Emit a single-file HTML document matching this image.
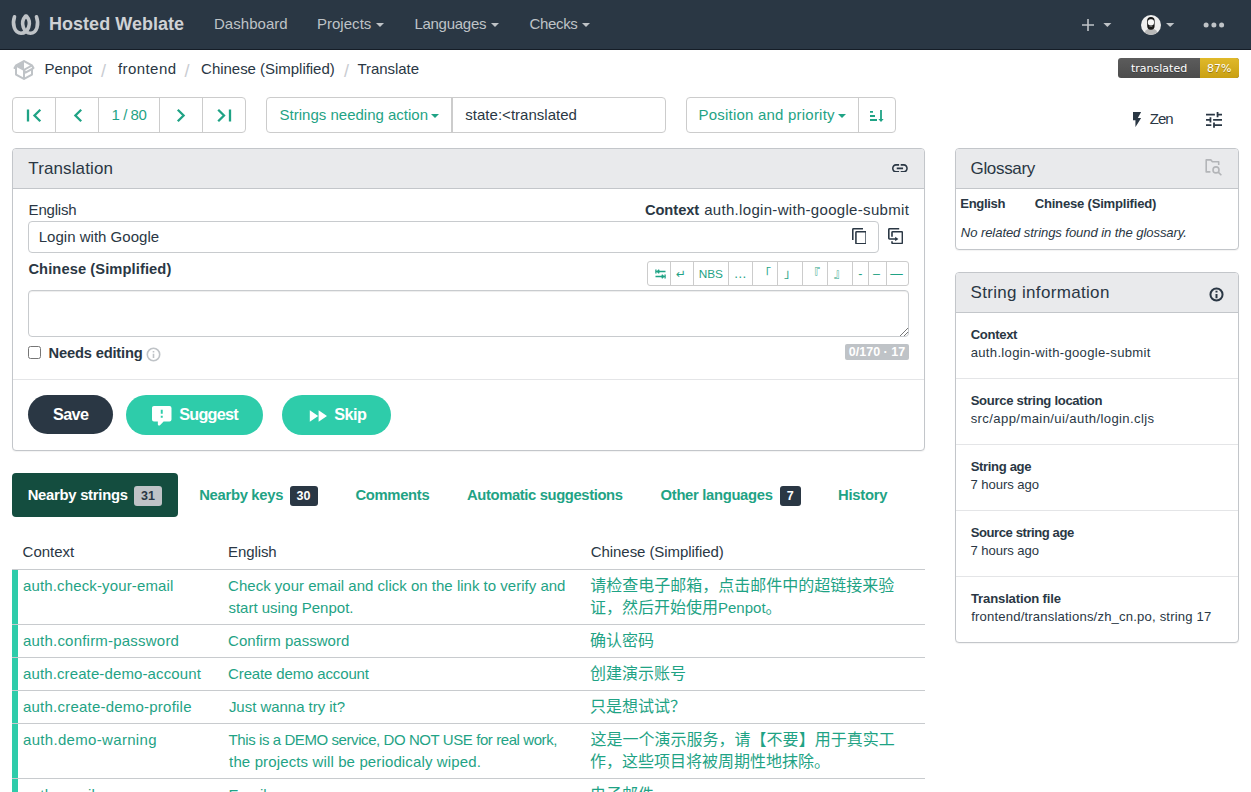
<!DOCTYPE html>
<html lang="en">
<head>
<meta charset="utf-8">
<title>Penpot/frontend — Chinese (Simplified) @ Hosted Weblate</title>
<style>
*{box-sizing:border-box;margin:0;padding:0}
html,body{width:1251px;height:792px;overflow:hidden;background:#fff}
body{font-family:"Liberation Sans","Noto Sans CJK SC",sans-serif;font-size:15px;color:#2a3744;position:relative;line-height:22px}
a{color:#1fa385;text-decoration:none}
.abs{position:absolute}
.t{position:absolute;white-space:nowrap;line-height:22px}
/* navbar */
#nav{position:absolute;left:0;top:0;width:1251px;height:50px;background:#2a3744;border-bottom:1px solid #151d27}
#nav .t{color:#bfc3c7;font-size:15px}
#nav .brand{font-weight:bold;font-size:18px;color:#cfd2d5}
.caret{display:inline-block;width:0;height:0;border-left:4px solid transparent;border-right:4px solid transparent;border-top:4px solid currentColor;vertical-align:middle;margin-left:4px}
/* breadcrumb */
.bc{color:#2a3744;font-size:15px}
.sep{color:#c9ccd2;font-size:18px}
/* buttons */
.btng{position:absolute;border:1px solid #ccc;border-radius:4px;background:#fff;height:36px}
.btng .d{position:absolute;top:0;width:1px;height:34px;background:#ccc}
.green{color:#1fa385}
/* panels */
.panel{position:absolute;border:1px solid #c3c6ca;border-radius:4px;background:#fff;box-shadow:0 1px 1px rgba(0,0,0,.05)}
.ph{position:absolute;left:0;top:0;right:0;height:40px;background:#e9eaec;border-bottom:1px solid #c3c6ca;border-radius:3px 3px 0 0}
.ph .t{font-size:17px;top:9px;left:15px;color:#2a3744}
.b{font-weight:bold;font-size:14.700px}
.s{font-size:13.100px}
.tb{font-size:14.800px}
.bdg{position:absolute;top:486px;height:20px;border-radius:3px;background:#2a3744;color:#fff;font-weight:bold;font-size:12.500px;line-height:20px;text-align:center}
.zh{font-size:16px}
.hr{position:absolute;left:0;right:0;height:1px;background:#e4e5e7}
</style>
</head>
<body>
<div id="nav">
<svg class="abs" style="left:10px;top:12px" width="32" height="26" viewBox="10 12 32 26"><g fill="none" stroke="#bfc3c7" stroke-width="3.600" stroke-linecap="round"><path d="M14.500 16.800C11.800 24 14.500 33.200 21 33.200C28 33.200 32.500 23 26.600 16.200"/><path d="M25.400 16.200C19.500 23 24 33.200 30.500 33.200C37 33.200 39.200 24 36.500 16.800"/></g></svg>
<span class="t brand" style="left:49.0px;top:13px;letter-spacing:0.03px">Hosted Weblate</span>
<span class="t" style="left:214.0px;top:13px;letter-spacing:0.03px">Dashboard</span>
<span class="t" style="left:316.9px;top:13px;letter-spacing:0.04px">Projects</span><i class="caret abs" style="left:375.700px;top:23px;margin:0;color:#bfc3c7"></i>
<span class="t" style="left:414.4px;top:13px;letter-spacing:-0.27px">Languages</span><i class="caret abs" style="left:490.800px;top:23px;margin:0;color:#bfc3c7"></i>
<span class="t" style="left:529.5px;top:13px;letter-spacing:-0.33px">Checks</span><i class="caret abs" style="left:581.800px;top:23px;margin:0;color:#bfc3c7"></i>
<svg class="abs" style="left:1080px;top:17px" width="34" height="16" viewBox="0 0 34 16"><path d="M2 8h12M8 2v12" stroke="#bfc3c7" stroke-width="1.6" fill="none"/><path d="M23.4 6h8l-4 4z" fill="#bfc3c7"/></svg>
<svg class="abs" style="left:1141px;top:15px" width="36" height="20" viewBox="0 0 36 20"><defs><clipPath id="av"><circle cx="10" cy="10" r="10"/></clipPath></defs><g clip-path="url(#av)"><rect width="20" height="20" fill="#efefef"/><ellipse cx="10" cy="20" rx="7" ry="6.800" fill="#b8b8b8"/><rect x="6.200" y="1.900" width="7.400" height="12.800" rx="3.600" fill="#161616"/><rect x="6.900" y="4.300" width="6.100" height="6.100" rx="2.600" fill="#f8f8f8"/><path d="M8.400 11.700q1.500-.8 3 0" stroke="#888" stroke-width=".8" fill="none"/></g><path d="M25 7.900h8.300l-4.150 4.200z" fill="#bfc3c7"/></svg>
<svg class="abs" style="left:1202px;top:21px" width="24" height="8" viewBox="0 0 24 8"><g fill="#bfc3c7"><circle cx="4.100" cy="4" r="2.500"/><circle cx="11.900" cy="4" r="2.500"/><circle cx="19.600" cy="4" r="2.500"/></g></svg>
</div>
<div id="crumbs">
<svg class="abs" style="left:11.900px;top:57.900px" width="24" height="24" viewBox="0 0 24 24"><path fill="#bfc3c7" d="M2 10.960C1.500 10.680 1.350 10.070 1.630 9.590L3.130 7C3.240 6.800 3.410 6.660 3.600 6.580L11.430 2.180C11.590 2.060 11.790 2 12 2C12.210 2 12.410 2.060 12.570 2.180L20.470 6.620C20.660 6.720 20.820 6.880 20.910 7.080L22.360 9.600C22.640 10.080 22.470 10.690 22 10.960L21 11.540V16.500C21 16.880 20.790 17.210 20.470 17.380L12.570 21.820C12.410 21.940 12.210 22 12 22C11.790 22 11.590 21.940 11.430 21.820L3.530 17.380C3.210 17.210 3 16.880 3 16.500V10.960C2.700 11.130 2.320 11.140 2 10.960M12 4.150V4.150L12 10.850V10.850L17.960 7.500L12 4.150M5 15.910L11 19.290V12.580L5 9.210V15.910M19 15.910V12.690L14 15.590C13.670 15.770 13.300 15.760 13 15.600V19.290L19 15.910M13.850 13.360L20.130 9.730L19.550 8.720L13.270 12.350L13.850 13.360Z"/></svg>
<span class="t bc" style="left:44.6px;top:58px;letter-spacing:-0.05px">Penpot</span>
<span class="t bc sep" style="left:100.9px;top:59.500px;letter-spacing:-0.05px">/</span>
<span class="t bc" style="left:117.9px;top:58px;letter-spacing:0.44px">frontend</span>
<span class="t bc sep" style="left:184.4px;top:59.500px;letter-spacing:-0.05px">/</span>
<span class="t bc" style="left:201.1px;top:58px;letter-spacing:-0.03px">Chinese (Simplified)</span>
<span class="t bc sep" style="left:343.9px;top:59.500px;letter-spacing:-0.15px">/</span>
<span class="t bc" style="left:357.5px;top:58px;letter-spacing:-0.05px">Translate</span>
<div class="abs" style="left:1118px;top:58px;width:121px;height:20px;border-radius:3px;overflow:hidden;background:linear-gradient(#5c5c5c,#4c4c4c);font-family:'DejaVu Sans',sans-serif;font-size:11px;color:#fff;line-height:20px;text-shadow:0 1px 0 rgba(0,0,0,.3)">
<div class="abs" style="left:82px;top:0;width:39px;height:20px;background:linear-gradient(#e0b92a,#c9a013)"></div>
<span class="abs" style="left:13px;top:1px">translated</span><span class="abs" style="left:89px;top:1px">87%</span></div>
</div>
<div id="toolbar">
<div class="btng" style="left:12px;top:97px;width:234px">
<i class="d" style="left:42px"></i><i class="d" style="left:85px"></i><i class="d" style="left:146px"></i><i class="d" style="left:189px"></i>
<svg class="abs" style="left:0;top:0" width="232" height="34" viewBox="13 98 232 34"><g fill="none" stroke="#1fa385" stroke-width="2.300"><path d="M28 109.500v12M40.300 109.800l-5.800 5.700 5.800 5.700"/><path d="M81.200 109.800l-5.800 5.700 5.800 5.700"/><path d="M177.800 109.800l5.800 5.700-5.800 5.700"/><path d="M218.200 109.800l5.800 5.700-5.800 5.700M230 109.500v12"/></g></svg>
<span class="t green" style="left:98.6px;top:6px;letter-spacing:-0.47px">1 / 80</span>
</div>
<div class="btng" style="left:266px;top:97px;width:400px">
<i class="d" style="left:184px;width:2px"></i>
<span class="t green" style="left:12.6px;top:6px;letter-spacing:-0.00px">Strings needing action</span><i class="caret abs" style="left:163.800px;top:16px;margin:0;color:#1fa385"></i>
<span class="t" style="left:198.3px;top:6px;color:#2a3744;letter-spacing:0.02px">state:&lt;translated</span>
</div>
<div class="btng" style="left:686px;top:97px;width:210px">
<i class="d" style="left:171px"></i>
<span class="t green" style="left:11.6px;top:6px;letter-spacing:0.21px">Position and priority</span><i class="caret abs" style="left:151.200px;top:16px;margin:0;color:#1fa385"></i>
<svg class="abs" style="left:182px;top:11px" width="16" height="14" viewBox="0 0 16 14"><g fill="none" stroke="#1fa385" stroke-width="1.800"><path d="M1 2.900h3M1 7h5M1 11h7M12 1v9.600"/></g><path d="M9.400 10.100h5.200l-2.600 2.800z" fill="#1fa385"/></svg>
</div>
<svg class="abs" style="left:1133px;top:112px" width="8.100" height="15.100" viewBox="7 2 10 20" preserveAspectRatio="none"><path fill="#2a3744" d="M7 2V13H10V22L17 10H13L17 2H7Z"/></svg>
<span class="t" style="left:1149.8px;top:108px;font-size:15px;letter-spacing:-1.00px">Zen</span>
<svg class="abs" style="left:1206px;top:112px" width="16" height="15.800" viewBox="3 3 18 18" preserveAspectRatio="none"><path fill="#2a3744" d="M3 17v2h6v-2H3zM3 5v2h10V5H3zm10 16v-2h8v-2h-8v-2h-2v6h2zM7 9v2H3v2h4v2h2V9H7zm14 4v-2H11v2h10zm-6-4h2V7h4V5h-4V3h-2v6z"/></svg>
</div>
<div id="main">
<div class="panel" style="left:12px;top:148px;width:913px;height:303px">
<div class="ph"><span class="t" style="left:15.3px;letter-spacing:0.12px">Translation</span>
<svg class="abs" style="left:879px;top:14.500px" width="15.800" height="8.700" viewBox="2 7 20 10" preserveAspectRatio="none"><path fill="#2a3744" d="M3.900 12C3.900 10.290 5.290 8.900 7 8.900H11V7H7A5 5 0 0 0 2 12A5 5 0 0 0 7 17H11V15.100H7C5.290 15.100 3.900 13.710 3.900 12M8 13H16V11H8V13M17 7H13V8.900H17C18.710 8.900 20.100 10.290 20.100 12C20.100 13.710 18.710 15.100 17 15.100H13V17H17A5 5 0 0 0 22 12A5 5 0 0 0 17 7Z"/></svg>
</div>
<span class="t" style="left:15.6px;top:50px;letter-spacing:-0.19px">English</span>
<span class="t b" style="left:631.9px;top:50px;letter-spacing:-0.05px">Context</span>
<span class="t" style="left:691.2px;top:50px;letter-spacing:0.31px">auth.login-with-google-submit</span>
<div class="abs" style="left:15px;top:72px;width:851px;height:32px;border:1px solid #c8cbce;border-radius:4px"></div>
<span class="t" style="left:25.7px;top:77px;letter-spacing:0.02px">Login with Google</span>
<svg class="abs" style="left:838.500px;top:78.500px" width="14.900" height="16.400" viewBox="2 1 19 22" preserveAspectRatio="none"><path fill="#2a3744" d="M19 21H8V7H19M19 5H8A2 2 0 0 0 6 7V21A2 2 0 0 0 8 23H19A2 2 0 0 0 21 21V7A2 2 0 0 0 19 5M16 1H4A2 2 0 0 0 2 3V17H4V3H16V1Z"/></svg>
<svg class="abs" style="left:875px;top:79.300px" width="15.200" height="16.100" viewBox="2 1 19 22" preserveAspectRatio="none"><path fill="#2a3744" d="M11 17H4A2 2 0 0 1 2 15V3A2 2 0 0 1 4 1H16V3H4V15H11V13L15 16L11 19V17M19 21V7H8V13H6V7A2 2 0 0 1 8 5H19A2 2 0 0 1 21 7V21A2 2 0 0 1 19 23H8A2 2 0 0 1 6 21V19H8V21H19Z"/></svg>
<span class="t b" style="left:15.4px;top:109px;letter-spacing:0.09px">Chinese (Simplified)</span>
<div class="abs" style="left:634px;top:112px;width:262px;height:25px;border:1px solid #ccc;border-radius:3px;font-size:12.500px;color:#1fa385"><i class="abs" style="left:22px;top:0;width:1px;height:23px;background:#ccc"></i><i class="abs" style="left:45px;top:0;width:1px;height:23px;background:#ccc"></i><i class="abs" style="left:80px;top:0;width:1px;height:23px;background:#ccc"></i><i class="abs" style="left:104px;top:0;width:1px;height:23px;background:#ccc"></i><i class="abs" style="left:129px;top:0;width:1px;height:23px;background:#ccc"></i><i class="abs" style="left:154px;top:0;width:1px;height:23px;background:#ccc"></i><i class="abs" style="left:179px;top:0;width:1px;height:23px;background:#ccc"></i><i class="abs" style="left:204px;top:0;width:1px;height:23px;background:#ccc"></i><i class="abs" style="left:220px;top:0;width:1px;height:23px;background:#ccc"></i><i class="abs" style="left:238px;top:0;width:1px;height:23px;background:#ccc"></i><svg class="abs" style="left:6.500px;top:7px" width="11" height="10" viewBox="0 0 13 12"><g fill="none" stroke="#1fa385" stroke-width="1.600"><path d="M1 0.500v5M12 6.500v5M2.500 3h10M5 0.800l-2.500 2.200 2.500 2.200M0.500 9h10M8 6.800l2.500 2.200-2.500 2.200"/></g></svg><span class="abs" style="left:12.9px;top:1px;width:40px;text-align:center;line-height:22px;white-space:nowrap;font-family:'DejaVu Sans',sans-serif;font-size:12px">↵</span><span class="abs" style="left:42.8px;top:1px;width:40px;text-align:center;line-height:22px;white-space:nowrap;font-size:11.800px">NBS</span><span class="abs" style="left:72.9px;top:1px;width:40px;text-align:center;line-height:22px;white-space:nowrap;letter-spacing:1.500px;font-size:13px">…</span><span class="abs" style="left:97.1px;top:1px;width:40px;text-align:center;line-height:22px;white-space:nowrap;font-size:12px">「</span><span class="abs" style="left:122.1px;top:1px;width:40px;text-align:center;line-height:22px;white-space:nowrap;font-size:12px">」</span><span class="abs" style="left:146.1px;top:1px;width:40px;text-align:center;line-height:22px;white-space:nowrap;font-size:12px">『</span><span class="abs" style="left:172.1px;top:1px;width:40px;text-align:center;line-height:22px;white-space:nowrap;font-size:12px">』</span><span class="abs" style="left:192.3px;top:1px;width:40px;text-align:center;line-height:22px;white-space:nowrap;">-</span><span class="abs" style="left:208.5px;top:1px;width:40px;text-align:center;line-height:22px;white-space:nowrap;">–</span><span class="abs" style="left:228.4px;top:1px;width:40px;text-align:center;line-height:22px;white-space:nowrap;">—</span></div>
<div class="abs" style="left:15px;top:141px;width:881px;height:47px;border:1px solid #c8cbce;border-radius:4px;box-shadow:inset 0 1px 1px rgba(0,0,0,.075)"></div>
<svg class="abs" style="left:886px;top:177.500px" width="10" height="10" viewBox="0 0 10 10"><path d="M9 1L1 9M9 5L5 9" stroke="#777" stroke-width="1" fill="none"/></svg>
<div class="abs" style="left:15px;top:197px;width:13px;height:13px;border:1px solid #767676;border-radius:2.500px;background:#fff"></div>
<span class="t b" style="left:35.5px;top:193px;letter-spacing:-0.17px">Needs editing</span>
<svg class="abs" style="left:132.500px;top:197.500px" width="15" height="15" viewBox="0 0 15 15"><circle cx="7.500" cy="7.500" r="6.200" fill="none" stroke="#bfc3c7" stroke-width="1.600"/><path d="M7.500 6.800v4.200M7.500 3.900v1.600" stroke="#bfc3c7" stroke-width="1.600"/></svg>
<span class="abs" style="left:832px;top:195px;width:64px;height:16px;background:#bfc3c7;border-radius:2px;color:#fff;font-weight:bold;font-size:12.500px;line-height:16px;text-align:center;white-space:nowrap">0/170 · 17</span>
<div class="hr" style="top:230px"></div>
<div class="abs" style="left:15px;top:246px;width:85px;height:39px;border-radius:20px;background:#2a3744"></div>
<span class="t b" style="left:40.0px;top:254px;color:#fff;font-size:16.200px;letter-spacing:-0.62px">Save</span>
<div class="abs" style="left:113px;top:246px;width:137px;height:40px;border-radius:20px;background:#2eccaa"></div>
<svg class="abs" style="left:137px;top:255px" width="23.500" height="23.400" viewBox="0 0 24 24"><path fill="#fff" d="M9 22A1 1 0 0 1 8 21V18H4A2 2 0 0 1 2 16V4C2 2.890 2.900 2 4 2H20A2 2 0 0 1 22 4V16A2 2 0 0 1 20 18H13.900L10.200 21.710C10 21.900 9.750 22 9.500 22V22H9M13 10V6H11V10H13M13 14V12H11V14H13Z"/></svg>
<span class="t b" style="left:166.2px;top:254px;color:#fff;font-size:16.200px;letter-spacing:-0.72px">Suggest</span>
<div class="abs" style="left:269px;top:246px;width:109px;height:40px;border-radius:20px;background:#2eccaa"></div>
<svg class="abs" style="left:296px;top:261px" width="19" height="12" viewBox="0 0 19 12"><path d="M0.800 0.200l8.400 5.800-8.400 5.800zM9.600 0.200l8.400 5.800-8.400 5.800z" fill="#fff"/></svg>
<span class="t b" style="left:321.3px;top:254px;color:#fff;font-size:16.200px;letter-spacing:-0.50px">Skip</span>
</div>
</div>
<div id="side">
<div class="panel" style="left:955px;top:148px;width:284px;height:102px">
<div class="ph"><span class="t" style="left:14.5px;letter-spacing:-0.32px">Glossary</span>
<svg class="abs" style="left:248px;top:9px" width="20" height="20" viewBox="0 0 20 20"><g fill="none" stroke="#b3b5b8" stroke-width="1.600" stroke-linejoin="round"><path d="M6.400 13.900H2.200V1.900h4.600l1.600 1.800h6.300v3.200"/><circle cx="12" cy="11.900" r="3"/><path d="M14.200 14.100l3.200 3.200"/></g></svg>
</div>
<span class="t b s" style="left:4.3px;top:44px;letter-spacing:-0.35px">English</span>
<span class="t b s" style="left:78.7px;top:44px;letter-spacing:-0.22px">Chinese (Simplified)</span>
<span class="t s" style="left:4.8px;top:73px;font-style:italic;letter-spacing:-0.09px">No related strings found in the glossary.</span>
</div>
<div class="panel" style="left:955px;top:272px;width:284px;height:371px">
<div class="ph"><span class="t" style="left:14.5px;letter-spacing:0.33px">String information</span>
<svg class="abs" style="left:252.500px;top:13.500px" width="15" height="15" viewBox="0 0 15 15"><circle cx="7.500" cy="7.500" r="6.050" fill="none" stroke="#2a3744" stroke-width="2"/><path d="M7.500 6.900v4.300M7.500 3.700v1.700" stroke="#2a3744" stroke-width="2"/></svg>
</div>
<span class="t b s" style="left:14.7px;top:51px;letter-spacing:-0.33px">Context</span>
<span class="t s" style="left:14.7px;top:69px;letter-spacing:0.31px">auth.login-with-google-submit</span>
<div class="hr" style="top:105px"></div>
<span class="t b s" style="left:14.7px;top:117px;letter-spacing:-0.31px">Source string location</span>
<span class="t s" style="left:14.7px;top:135px;letter-spacing:0.39px">src/app/main/ui/auth/login.cljs</span>
<div class="hr" style="top:171px"></div>
<span class="t b s" style="left:14.7px;top:183px;letter-spacing:-0.36px">String age</span>
<span class="t s" style="left:14.5px;top:201px;letter-spacing:-0.07px">7 hours ago</span>
<div class="hr" style="top:237px"></div>
<span class="t b s" style="left:14.7px;top:249px;letter-spacing:-0.44px">Source string age</span>
<span class="t s" style="left:14.5px;top:267px;letter-spacing:-0.07px">7 hours ago</span>
<div class="hr" style="top:303px"></div>
<span class="t b s" style="left:15.0px;top:315px;letter-spacing:-0.16px">Translation file</span>
<span class="t s" style="left:15.2px;top:333px;letter-spacing:0.18px">frontend/translations/zh_cn.po, string 17</span>
</div>
</div>
<div id="tabs">
<div class="abs" style="left:12px;top:473px;width:166px;height:44px;border-radius:4px;background:#144d3f"></div>
<span class="t b tb" style="left:27.7px;top:484px;color:#fff;letter-spacing:-0.26px">Nearby strings</span>
<span class="bdg" style="left:134px;background:#bfc3c7;color:#2a3744;width:28px">31</span>
<span class="t b tb green" style="left:199.2px;top:484px;letter-spacing:-0.30px">Nearby keys</span>
<span class="bdg" style="left:289.500px;width:28px">30</span>
<span class="t b tb green" style="left:355.4px;top:484px;letter-spacing:-0.31px">Comments</span>
<span class="t b tb green" style="left:467.0px;top:484px;letter-spacing:-0.38px">Automatic suggestions</span>
<span class="t b tb green" style="left:660.6px;top:484px;letter-spacing:-0.32px">Other languages</span>
<span class="bdg" style="left:779.500px;width:21.500px">7</span>
<span class="t b tb green" style="left:838.0px;top:484px;letter-spacing:-0.26px">History</span>
</div>
<div id="table">
<span class="t" style="left:22.6px;top:541px;letter-spacing:0.00px">Context</span>
<span class="t" style="left:228.1px;top:541px;letter-spacing:-0.11px">English</span>
<span class="t" style="left:590.8px;top:541px;letter-spacing:-0.07px">Chinese (Simplified)</span>
<div class="abs" style="left:12px;top:568.500px;width:912.500px;height:1.500px;background:#c8cbce"></div>
<div class="abs" style="left:12px;top:570px;width:5.700px;height:230px;background:#2eccaa"></div>
<span class="t green" style="left:23.0px;top:574.6px;letter-spacing:0.14px">auth.check-your-email</span>
<span class="t green" style="left:228.1px;top:574.6px;letter-spacing:0.01px">Check your email and click on the link to verify and</span>
<span class="t green" style="left:228.4px;top:596.6px;letter-spacing:-0.00px">start using Penpot.</span>
<span class="t green zh" style="left:590.2px;top:574.6px;letter-spacing:0.01px">请检查电子邮箱，点击邮件中的超链接来验</span>
<span class="t green zh" style="left:590px;top:596.6px">证，然后开始使用<span style="font-size:15px">Penpot</span>。</span>
<div class="abs" style="left:12px;top:624.0px;width:912.500px;height:1px;background:#c8cbce"></div>
<span class="t green" style="left:23.0px;top:629.7px;letter-spacing:0.21px">auth.confirm-password</span>
<span class="t green" style="left:228.1px;top:629.7px;letter-spacing:0.02px">Confirm password</span>
<span class="t green zh" style="left:590px;top:629.7px">确认密码</span>
<div class="abs" style="left:12px;top:656.8px;width:912.500px;height:1px;background:#c8cbce"></div>
<span class="t green" style="left:23.0px;top:662.5px;letter-spacing:0.12px">auth.create-demo-account</span>
<span class="t green" style="left:228.1px;top:662.5px;letter-spacing:-0.14px">Create demo account</span>
<span class="t green zh" style="left:590px;top:662.5px">创建演示账号</span>
<div class="abs" style="left:12px;top:689.9px;width:912.500px;height:1px;background:#c8cbce"></div>
<span class="t green" style="left:23.0px;top:695.6px;letter-spacing:0.22px">auth.create-demo-profile</span>
<span class="t green" style="left:228.9px;top:695.6px;letter-spacing:-0.03px">Just wanna try it?</span>
<span class="t green zh" style="left:590px;top:695.6px">只是想试试？</span>
<div class="abs" style="left:12px;top:723.0px;width:912.500px;height:1px;background:#c8cbce"></div>
<span class="t green" style="left:23.0px;top:728.7px;letter-spacing:0.32px">auth.demo-warning</span>
<span class="t green" style="left:228.6px;top:728.7px;letter-spacing:-0.42px">This is a DEMO service, DO NOT USE for real work,</span>
<span class="t green" style="left:229.1px;top:750.7px;letter-spacing:0.13px">the projects will be periodicaly wiped.</span>
<span class="t green zh" style="left:590.5px;top:728.7px;letter-spacing:0.01px">这是一个演示服务，请【不要】用于真实工</span>
<span class="t green zh" style="left:590px;top:750.7px">作，这些项目将被周期性地抹除。</span>
<div class="abs" style="left:12px;top:777.8px;width:912.500px;height:1px;background:#c8cbce"></div>
<span class="t green" style="left:23px;top:783.5px;letter-spacing:0.3px">auth.email</span>
<span class="t green" style="left:228.6px;top:783.5px;letter-spacing:0.15px">Email</span>
<span class="t green zh" style="left:590px;top:783.5px">电子邮件</span>
</div>
</body>
</html>
